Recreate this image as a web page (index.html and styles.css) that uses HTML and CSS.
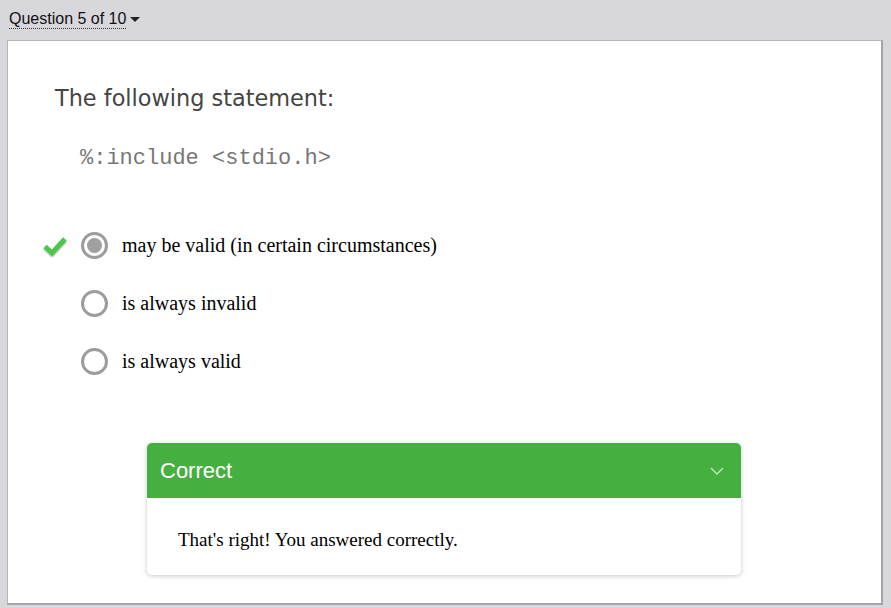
FILE: index.html
```html
<!DOCTYPE html>
<html>
<head>
<meta charset="utf-8">
<link rel="stylesheet" href="styles.css">
</head>
<body>
<div class="topbar">
  <span class="qnav">Question 5 of 10</span><span class="caret"></span>
</div>
<div class="card">
  <div class="prompt">The following statement:</div>
  <div class="code">%:include &lt;stdio.h&gt;</div>
  <div class="options">
    <div class="option">
      <span class="mark"><svg width="26" height="22" viewBox="0 0 26 22"><path d="M3 11.5 L10 18 L23 4" fill="none" stroke="#d2d2d2" stroke-width="5" stroke-linejoin="miter" transform="translate(0,2)"/><path d="M3 11.5 L10 18 L23 4" fill="none" stroke="#4cc54c" stroke-width="5" stroke-linejoin="miter"/></svg></span>
      <span class="radio checked"></span>
      <span class="label">may be valid (in certain circumstances)</span>
    </div>
    <div class="option">
      <span class="mark"></span>
      <span class="radio"></span>
      <span class="label">is always invalid</span>
    </div>
    <div class="option">
      <span class="mark"></span>
      <span class="radio"></span>
      <span class="label">is always valid</span>
    </div>
  </div>
  <div class="feedback">
    <div class="fb-head">
      <span class="fb-title">Correct</span>
      <svg class="chev" width="14" height="8" viewBox="0 0 14 8"><path d="M1 1 L7 7 L13 1" fill="none" stroke="#b9e3b5" stroke-width="1.5"/></svg>
    </div>
    <div class="fb-body">That's right! You answered correctly.</div>
  </div>
</div>
</body>
</html>
```
FILE: styles.css
```css
html, body {
  margin: 0;
  padding: 0;
}
body {
  background: #d8d7dc;
  width: 891px;
  height: 608px;
  overflow: hidden;
}
.topbar {
  height: 40px;
  padding-left: 9px;
  display: flex;
  align-items: flex-start;
  padding-top: 10px;
  box-sizing: border-box;
  font-family: "Liberation Sans", Arial, sans-serif;
  font-size: 16px;
  color: #111;
}
.qnav {
  border-bottom: 1px dotted #333;
  line-height: 18px;
}
.caret {
  width: 0;
  height: 0;
  border-left: 5px solid transparent;
  border-right: 5px solid transparent;
  border-top: 5px solid #222;
  margin-left: 4px;
  margin-top: 7px;
}
.card {
  margin-left: 7px;
  width: 876px;
  height: 565px;
  box-sizing: border-box;
  background: #fff;
  border: 1px solid #b4b3ba;
  border-right: 2px solid #a5a4ab;
  border-bottom: 2px solid #a5a4ab;
  padding-top: 44px;
}
.prompt {
  font-family: "DejaVu Sans", Verdana, sans-serif;
  font-size: 22.4px;
  color: #444;
  padding-left: 47px;
  line-height: 26px;
}
.code {
  font-family: "Liberation Mono", "Courier New", monospace;
  font-size: 22px;
  color: #777;
  padding-left: 72px;
  margin-top: 36px;
  line-height: 24px;
}
.options {
  margin-top: 61px;
  display: flex;
  flex-direction: column;
  gap: 31px;
}
.option {
  display: flex;
  align-items: center;
  height: 27px;
}
.mark {
  width: 26px;
  height: 22px;
  margin-left: 34px;
  margin-right: 13px;
  display: flex;
}
.radio {
  width: 27px;
  height: 27px;
  box-sizing: border-box;
  border: 3px solid #9c9c9c;
  border-radius: 50%;
  display: flex;
  align-items: center;
  justify-content: center;
}
.radio.checked::after {
  content: "";
  width: 15px;
  height: 15px;
  border-radius: 50%;
  background: #a0a0a0;
}
.label {
  font-family: "Liberation Serif", "Times New Roman", serif;
  font-size: 20px;
  color: #000;
  margin-left: 14px;
}
.feedback {
  margin-top: 68px;
  margin-left: 139px;
  width: 594px;
  border-radius: 5px;
  background: #fff;
  box-shadow: 0 1px 5px rgba(0,0,0,0.22);
  overflow: hidden;
}
.fb-head {
  background: #45b03f;
  height: 55px;
  display: flex;
  align-items: center;
  justify-content: space-between;
  padding: 0 17px 0 13px;
}
.fb-title {
  font-family: "Liberation Sans", Arial, sans-serif;
  font-size: 22px;
  color: #fff;
}
.fb-body {
  font-family: "Liberation Serif", "Times New Roman", serif;
  font-size: 19px;
  color: #000;
  padding: 31px 31px 24px;
  line-height: 22px;
}
```
